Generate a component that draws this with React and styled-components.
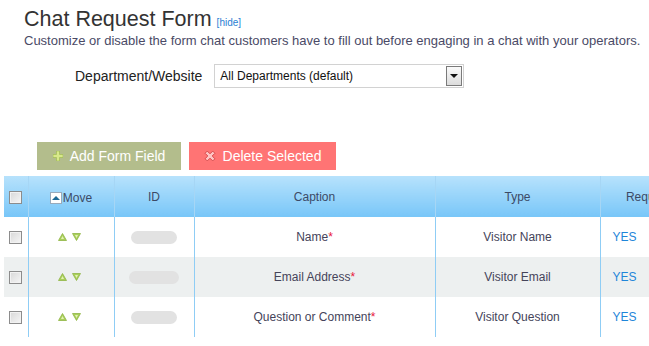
import React from 'react';
import styled, {createGlobalStyle} from 'styled-components';

const GlobalStyle = createGlobalStyle`
    html, body {
        margin: 0;
        padding: 0;
        overflow: hidden;
        background: #fff;
        font-family: "Liberation Sans", Arial, sans-serif;
    }
    * { box-sizing: border-box; }
`;

const Page = styled.div`
    width: 649px;
    height: 346px;
    overflow: hidden;
`;

const Header = styled.div`
    padding: 6px 0 0 24px;
`;

const TitleRow = styled.div`
    display: flex;
    align-items: baseline;
    gap: 5px;
`;

const Title = styled.h1`
    margin: 0;
    font-size: 21.5px;
    font-weight: normal;
    line-height: 26px;
    color: #333;
`;

const HideLink = styled.a`
    font-size: 10px;
    color: #2a7fd4;
    text-decoration: none;
`;

const Subtitle = styled.p`
    margin: 1px 0 0;
    font-size: 13px;
    line-height: 16px;
    color: #4a4a66;
`;

const FieldRow = styled.div`
    display: flex;
    align-items: center;
    gap: 12px;
    padding: 15px 0 0 75px;
`;

const Label = styled.label`
    font-size: 14px;
    color: #222;
`;

const Select = styled.div`
    width: 250px;
    height: 24px;
    border: 1px solid #d2d2d2;
    display: flex;
    align-items: center;
    justify-content: space-between;
    padding-left: 5px;
    font-size: 12px;
    color: #111;
`;

const SelectArrow = styled.span`
    width: 16px;
    height: 20px;
    margin-right: 1px;
    border: 1px solid #7a7a7a;
    background: linear-gradient(#fafafa, #dcdcdc);
    display: flex;
    align-items: center;
    justify-content: center;

    &::after {
        content: '';
        border-left: 4px solid transparent;
        border-right: 4px solid transparent;
        border-top: 4px solid #111;
    }
`;

const Toolbar = styled.div`
    display: flex;
    gap: 8px;
    padding: 54px 0 0 37px;
`;

const Button = styled.button`
    height: 28px;
    width: ${p => p.$w}px;
    border: none;
    background: ${p => p.$bg};
    color: #fff;
    font-family: inherit;
    font-size: 14px;
    display: flex;
    align-items: center;
    justify-content: center;
    gap: 7px;
    padding: 0;
`;

const Table = styled.table`
    margin: 6px 0 0 4px;
    border-collapse: collapse;
    table-layout: fixed;
    width: 696px;
    font-size: 12px;
`;

const Th = styled.th`
    height: 41px;
    padding: 0;
    font-weight: normal;
    color: #3c4a66;
    background: linear-gradient(#b7e2fc, #78c6f8);
    border-left: 1px solid #a6d6f5;
    text-align: center;
    white-space: nowrap;
    &:first-child { border-left: none; }
`;

const Tr = styled.tr`
    background: ${p => (p.$alt ? '#edf0f0' : '#fff')};
`;

const Td = styled.td`
    height: 40px;
    padding: 0;
    text-align: center;
    color: #45445a;
    border-left: 1px solid #8fcdf5;
    &:first-child { border-left: none; }
`;

const Check = styled.span`
    display: inline-block;
    width: 13px;
    height: 13px;
    border: 1px solid #8c8c8c;
    background: linear-gradient(135deg, #d8d8d8, #f6f6f6);
    box-shadow: inset 0 0 0 1px #f2f2f2;
    vertical-align: middle;
`;

const MoveLabel = styled.span`
    display: inline-flex;
    align-items: center;
    gap: 1px;
`;

const MoveIcon = styled.span`
    width: 12px;
    height: 12px;
    border: 1px solid #9ab;
    background: #fff;
    display: inline-flex;
    align-items: center;
    justify-content: center;

    &::after {
        content: '';
        border-left: 4px solid transparent;
        border-right: 4px solid transparent;
        border-bottom: 4px solid #1d6a96;
    }
`;

const Arrows = styled.span`
    display: inline-flex;
    gap: 5px;
    align-items: center;
    margin-left: -3px;
`;

const Blur = styled.span`
    display: inline-block;
    width: ${p => p.$w}px;
    height: 13px;
    border-radius: 7px;
    background: #e2e2e2;
    filter: blur(0.6px);
    vertical-align: middle;
`;

const Req = styled.span`
    color: #e8173c;
`;

const Yes = styled.span`
    color: #1f86d9;
    display: block;
    text-align: left;
    padding-left: 12px;
`;

const Plus = () => (
    <svg width="10" height="10" viewBox="0 0 10 10">
        <path d="M3.5 0h3v3.5H10v3H6.5V10h-3V6.5H0v-3h3.5z" fill="#d8e98a" stroke="#9ab84a" strokeWidth="0.6" />
    </svg>
);

const Cross = () => (
    <svg width="12" height="12" viewBox="0 0 11 11">
        <path d="M1 3l2-2 2.5 2.5L8 1l2 2-2.5 2.5L10 8l-2 2-2.5-2.5L3 10 1 8l2.5-2.5z" fill="#ffc4c4" stroke="#d04040" strokeWidth="0.8" />
    </svg>
);

const Tri = ({down}) => (
    <svg width="9" height="8" viewBox="0 0 9 8">
        <path d={down ? 'M0.5 0.5h8L4.5 7.5z' : 'M4.5 0.5l4 7h-8z'} fill="#a9cf5a" stroke="#8fb544" strokeWidth="0.8" />
        <path d={down ? 'M3 2h3L4.5 5z' : 'M4.5 3L6 6H3z'} fill="#e3f1b5" />
    </svg>
);

const rows = [
    {caption: 'Name', type: 'Visitor Name', w: 46},
    {caption: 'Email Address', type: 'Visitor Email', w: 50},
    {caption: 'Question or Comment', type: 'Visitor Question', w: 46},
];

export default function App() {
    return (
        <Page>
            <GlobalStyle />
            <Header>
                <TitleRow>
                    <Title>Chat Request Form</Title>
                    <HideLink href="#">[hide]</HideLink>
                </TitleRow>
                <Subtitle>Customize or disable the form chat customers have to fill out before engaging in a chat with your operators.</Subtitle>
            </Header>
            <FieldRow>
                <Label>Department/Website</Label>
                <Select>
                    All Departments (default)
                    <SelectArrow />
                </Select>
            </FieldRow>
            <Toolbar>
                <Button $w={144} $bg="#b3bd8c"><Plus />Add Form Field</Button>
                <Button $w={147} $bg="#ff7474"><Cross />Delete Selected</Button>
            </Toolbar>
            <Table>
                <colgroup>
                    <col style={{width: 24}} />
                    <col style={{width: 86}} />
                    <col style={{width: 80}} />
                    <col style={{width: 241}} />
                    <col style={{width: 165}} />
                    <col style={{width: 100}} />
                </colgroup>
                <thead>
                    <tr>
                        <Th><Check /></Th>
                        <Th><MoveLabel><MoveIcon />Move</MoveLabel></Th>
                        <Th>ID</Th>
                        <Th>Caption</Th>
                        <Th>Type</Th>
                        <Th>Required</Th>
                    </tr>
                </thead>
                <tbody>
                    {rows.map((r, i) => (
                        <Tr key={r.caption} $alt={i === 1}>
                            <Td><Check /></Td>
                            <Td><Arrows><Tri /><Tri down /></Arrows></Td>
                            <Td><Blur $w={r.w} /></Td>
                            <Td>{r.caption}<Req>*</Req></Td>
                            <Td>{r.type}</Td>
                            <Td><Yes>YES</Yes></Td>
                        </Tr>
                    ))}
                </tbody>
            </Table>
        </Page>
    );
}
